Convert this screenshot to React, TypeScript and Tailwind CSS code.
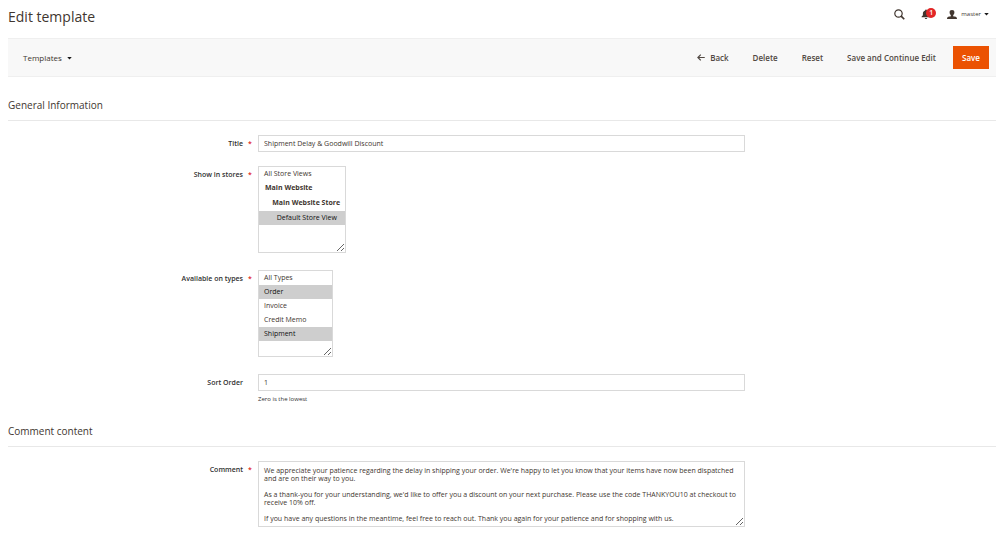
import type { ReactNode } from "react";

const NBSP = "\u00a0";

const commentText = `We appreciate your patience regarding the delay in shipping your order. We're happy to let you know that your items have now been dispatched and are on their way to you.

As a thank-you for your understanding, we'd like to offer you a discount on your next purchase. Please use the code THANKYOU10 at checkout to receive 10% off.

If you have any questions in the meantime, feel free to reach out. Thank you again for your patience and for shopping with us.`;

const types = ["All Types", "Order", "Invoice", "Credit Memo", "Shipment"];

const inputClass =
    "block h-[17px] w-full border border-[#d9d9d9] bg-white px-[5px] text-[7px] text-[#41362f] outline-none";
const selectClass =
    "mb-[3px] block h-[87px] resize overflow-auto border border-[#d9d9d9] bg-white text-[7px] text-[#41362f] outline-none";
const optionClass = "h-[14px] min-h-0 px-[5px] py-[2px] checked:bg-[#cecece]";
const groupClass = "pt-[2px] pb-[3px] pl-1 font-bold";

function Caret() {
    return (
        <svg viewBox="0 0 10 6" className="h-[3px] w-[5px]" aria-hidden="true">
            <path d="M.5 0h9L5 5z" fill="#1a1a1a" />
        </svg>
    );
}

interface FieldProps {
    id: string;
    label: string;
    required?: boolean;
    note?: string;
    children: ReactNode;
}

function Field({ id, label, required, note, children }: FieldProps) {
    return (
        <div className="grid grid-cols-[1fr_2fr_1fr]">
            <label htmlFor={id} className="flex justify-end text-[7px] leading-[17px] font-semibold text-[#303030]">
                {label}
                <span className="w-3 pl-[5px] text-[#e22626]">{required ? "*" : ""}</span>
            </label>
            <div className="pr-1 pl-[3px]">
                {children}
                {note && <p className="mt-1 text-[6px] leading-[9px] text-[#303030]">{note}</p>}
            </div>
        </div>
    );
}

function Section({ title, children }: { title: string; children: ReactNode }) {
    return (
        <section>
            <h2 className="border-b border-[#e8e8e8] pb-[7px] text-[10px] leading-[15px] text-[#41362f]">{title}</h2>
            <div className="mt-[14px] flex flex-col">{children}</div>
        </section>
    );
}

function HeaderTools() {
    return (
        <div className="flex h-5 items-center pr-[7px]">
            <button type="button" aria-label="Search" className="mr-4">
                <svg viewBox="0 0 22 22" className="size-[11px]" fill="none" stroke="#41362f">
                    <circle cx="9" cy="9" r="7.4" strokeWidth="2.4" />
                    <path d="M14.3 14.3 20.5 20.5" strokeWidth="3.4" />
                </svg>
            </button>
            <button type="button" aria-label="Notifications" className="relative mr-[11px] h-[10px] w-[15px]">
                <svg viewBox="0 0 18 18" className="size-[10px]" fill="#41362f">
                    <path d="M9 1c1 0 1.6.6 1.6 1.5C13.2 3.3 14.6 5.4 14.6 8v3.4L17 14v1H1v-1l2.4-2.6V8c0-2.6 1.4-4.7 4-5.5C7.4 1.6 8 1 9 1zM6.8 16h4.4c-.2 1.2-1 2-2.2 2s-2-.8-2.2-2z" />
                </svg>
                <span className="absolute -top-px right-0 size-[10px] rounded-full bg-[#e22626] text-center text-[7px] leading-[10px] font-semibold text-white">
                    1
                </span>
            </button>
            <button type="button" className="flex items-center text-[6px] text-[#41362f]">
                <svg viewBox="0 0 20 18" className="mr-1 h-[9px] w-[10px]" fill="#41362f">
                    <path d="M10 0c3.2 0 4.8 1.800 4.800 4.600 0 2.400-.8 4.400-2.400 5.600v1.600c0 .6 1 1 3 1.400 3.200.7 4.600 1.600 4.600 4.800H0c0-3.200 1.400-4.100 4.600-4.800 2-.4 3-.8 3-1.400v-1.600C6 9 5.200 7 5.200 4.600 5.200 1.800 6.800 0 10 0z" />
                </svg>
                <span className="mr-[3px]">master</span>
                <Caret />
            </button>
        </div>
    );
}

export default function App() {
    return (
        <main className="bg-white pr-1 pb-2 pl-2 font-['Open_Sans','Noto_Sans',sans-serif]">
            <header className="flex items-start justify-between pt-1">
                <h1 className="pt-[3px] text-[14px] leading-[20px] text-[#41362f]">Edit template</h1>
                <HeaderTools />
            </header>

            <div className="mt-[11px] flex h-[39px] items-center justify-between border-y border-[#efefef] bg-[#f8f8f8] pr-[7px] pl-[15px]">
                <button type="button" className="flex items-center gap-[5px] pt-px text-[8px] text-[#41362f]">
                    Templates
                    <Caret />
                </button>
                <div className="flex items-center text-[8px] font-semibold text-[#514943]">
                    <button type="button" className="mr-6 flex items-center gap-[5px]">
                        <svg viewBox="0 0 16 14" className="h-[7px] w-2" fill="none" stroke="#514943" strokeWidth="2.4">
                            <path d="M15.5 7H2M7.5 1.2 1.8 7l5.7 5.8" />
                        </svg>
                        Back
                    </button>
                    <button type="button" className="mr-6">Delete</button>
                    <button type="button" className="mr-6">Reset</button>
                    <button type="button" className="mr-[17px]">Save and Continue Edit</button>
                    <button type="button" className="h-[23px] w-9 bg-[#eb5202] text-white">Save</button>
                </div>
            </div>

            <form className="mt-[21px] flex flex-col gap-5">
                <Section title="General Information">
                    <div className="flex flex-col gap-[14px]">
                        <Field id="title" label="Title" required>
                            <input id="title" type="text" className={inputClass} defaultValue="Shipment Delay & Goodwill Discount" />
                        </Field>
                        <Field id="stores" label="Show in stores" required>
                            <select id="stores" multiple className={`${selectClass} w-[88px]`} defaultValue={["default"]}>
                                <option value="all" className={optionClass}>All Store Views</option>
                                <optgroup label="Main Website" className={groupClass} />
                                <optgroup label={`${NBSP.repeat(4)}Main Website Store`} className={groupClass} />
                                <option value="default" className={optionClass}>
                                    {`${NBSP.repeat(7)}Default Store View`}
                                </option>
                            </select>
                        </Field>
                        <Field id="types" label="Available on types" required>
                            <select id="types" multiple className={`${selectClass} w-[75px]`} defaultValue={["Order", "Shipment"]}>
                                {types.map((type) => (
                                    <option key={type} value={type} className={optionClass}>{type}</option>
                                ))}
                            </select>
                        </Field>
                        <Field id="sort" label="Sort Order" note="Zero is the lowest">
                            <input id="sort" type="text" className={inputClass} defaultValue="1" />
                        </Field>
                    </div>
                </Section>

                <Section title="Comment content">
                    <Field id="comment" label="Comment" required>
                        <textarea
                            id="comment"
                            rows={6}
                            className="block h-[66px] w-full resize border border-[#d9d9d9] bg-white px-[5px] py-[5px] text-[7px] leading-[8px] text-[#41362f] outline-none"
                            defaultValue={commentText}
                        />
                    </Field>
                </Section>
            </form>
        </main>
    );
}
